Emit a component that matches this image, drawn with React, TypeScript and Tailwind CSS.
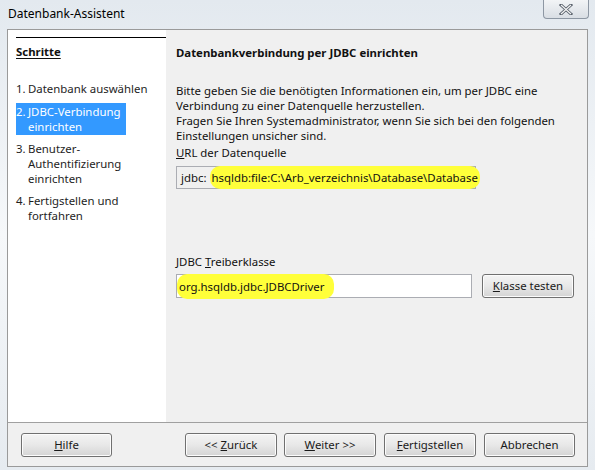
import React from "react";

function WinButton({ children, className = "" }: { children: React.ReactNode; className?: string }) {
  return (
    <button
      className={`h-[24px] rounded-[3px] border border-[#707070] bg-linear-to-b from-[#f4f4f4] via-[#e8e8e8] to-[#d4d4d4] text-[11.4px] text-[#1a1a1a] shadow-[inset_0_0_0_1px_#fcfcfc] ${className}`}
    >
      {children}
    </button>
  );
}

const Hl = ({ children, className = "" }: { children: React.ReactNode; className?: string }) => (
  <span className={`rounded-[10px] bg-[#ffff3a] ${className}`}>{children}</span>
);

export default function App() {
  return (
    <div
      className="relative flex h-[470px] w-[595px] flex-col overflow-hidden bg-linear-to-b from-[#e3e9ef] via-[#f6f8fa] to-[#e6ebf0] text-[11.4px] text-[#111]"
      style={{ fontFamily: '"Noto Sans", "Open Sans", sans-serif' }}
    >
      {/* Titelleiste */}
      <div className="flex h-[29px] shrink-0 items-start justify-between pl-[8px] pr-[6px]">
        <span className="mt-[5px] text-[12px] text-black">Datenbank-Assistent</span>
        <div className="flex h-[19px] w-[46px] items-center justify-center rounded-b-[4px] border border-t-0 border-[#8d97a3] bg-linear-to-b from-[#f2f4f6] to-[#d9dee4]">
          <svg width="14" height="11" viewBox="0 0 14 11">
            <path d="M2 1 L12 10 M12 1 L2 10" stroke="#58606b" strokeWidth="3" strokeLinecap="square" />
            <path d="M2 1 L12 10 M12 1 L2 10" stroke="#f4f4f4" strokeWidth="1.2" />
          </svg>
        </div>
      </div>

      {/* Client-Bereich */}
      <div className="mx-[7px] mb-[3px] flex flex-1 flex-col border border-[#9a9a9a] bg-[#f0f0f0]">
        <div className="flex flex-1">
          {/* Schritte */}
          <div className="w-[158px] shrink-0 bg-white pl-[8px] pt-[7px]">
            <div className="border-t border-black" />
            <div className="mt-[5px] font-bold underline underline-offset-2">Schritte</div>
            <div className="mt-[21px] flex flex-col leading-[15px] text-[#1e1e1e]">
              <div className="flex">
                <span className="w-[12px] shrink-0">1.</span>
                <span>Datenbank auswählen</span>
              </div>
              <div className="mt-[7px] flex w-[110px] bg-[#3399ff] py-[1px] text-white">
                <span className="w-[12px] shrink-0">2.</span>
                <span>JDBC-Verbindung einrichten</span>
              </div>
              <div className="mt-[6px] flex">
                <span className="w-[12px] shrink-0">3.</span>
                <span className="w-[120px]">
                  Benutzer-
                  <br />
                  Authentifizierung
                  <br />
                  einrichten
                </span>
              </div>
              <div className="mt-[7px] flex">
                <span className="w-[12px] shrink-0">4.</span>
                <span className="w-[110px]">
                  Fertigstellen und
                  <br />
                  fortfahren
                </span>
              </div>
            </div>
          </div>

          {/* Inhalt */}
          <div className="flex-1 pl-[10px] pt-[15px] leading-[15px]">
            <div className="font-bold">Datenbankverbindung per JDBC einrichten</div>
            <p className="mt-[23px] w-[400px]">
              Bitte geben Sie die benötigten Informationen ein, um per JDBC eine
              <br />
              Verbindung zu einer Datenquelle herzustellen.
              <br />
              Fragen Sie Ihren Systemadministrator, wenn Sie sich bei den folgenden
              <br />
              Einstellungen unsicher sind.
            </p>
            <div className="mt-[2px]">
              <span className="underline">U</span>RL der Datenquelle
            </div>
            <div className="mt-[6px] flex h-[23px] w-[300px] items-center border border-[#abadb3] bg-[#f0f0f0] pl-[4px]">
              <span>jdbc:</span>
              <Hl className="-my-[3px] ml-[4px] py-[4px] pl-[1px] pr-[2px]">
                hsqldb:file:C:\Arb_verzeichnis\Database\Database
              </Hl>
            </div>

            <div className="mt-[65px]">
              JDBC <span className="underline">T</span>reiberklasse
            </div>
            <div className="mt-[5px] flex items-center gap-[10px]">
              <div className="flex h-[24px] w-[296px] items-center border border-[#abadb3] bg-white">
                <Hl className="-my-[3px] py-[5px] pl-[2px] pr-[10px]">org.hsqldb.jdbc.JDBCDriver</Hl>
              </div>
              <WinButton className="-mt-[1px] w-[92px]">
                <span className="underline">K</span>lasse testen
              </WinButton>
            </div>
          </div>
        </div>

        {/* Knopfleiste */}
        <div className="flex h-[44px] shrink-0 items-center border-t border-[#a0a0a0] pl-[13px] pr-[12px]">
          <WinButton className="w-[91px]">
            <span className="underline">H</span>ilfe
          </WinButton>
          <div className="ml-auto flex gap-[7px]">
            <WinButton className="w-[92px]">
              &lt;&lt; <span className="underline">Z</span>urück
            </WinButton>
            <WinButton className="w-[92px]">
              <span className="underline">W</span>eiter &gt;&gt;
            </WinButton>
            <WinButton className="ml-[1px] w-[92px]">
              <span className="underline">F</span>ertigstellen
            </WinButton>
            <WinButton className="ml-[1px] w-[91px]">Abbrechen</WinButton>
          </div>
        </div>
      </div>
    </div>
  );
}
